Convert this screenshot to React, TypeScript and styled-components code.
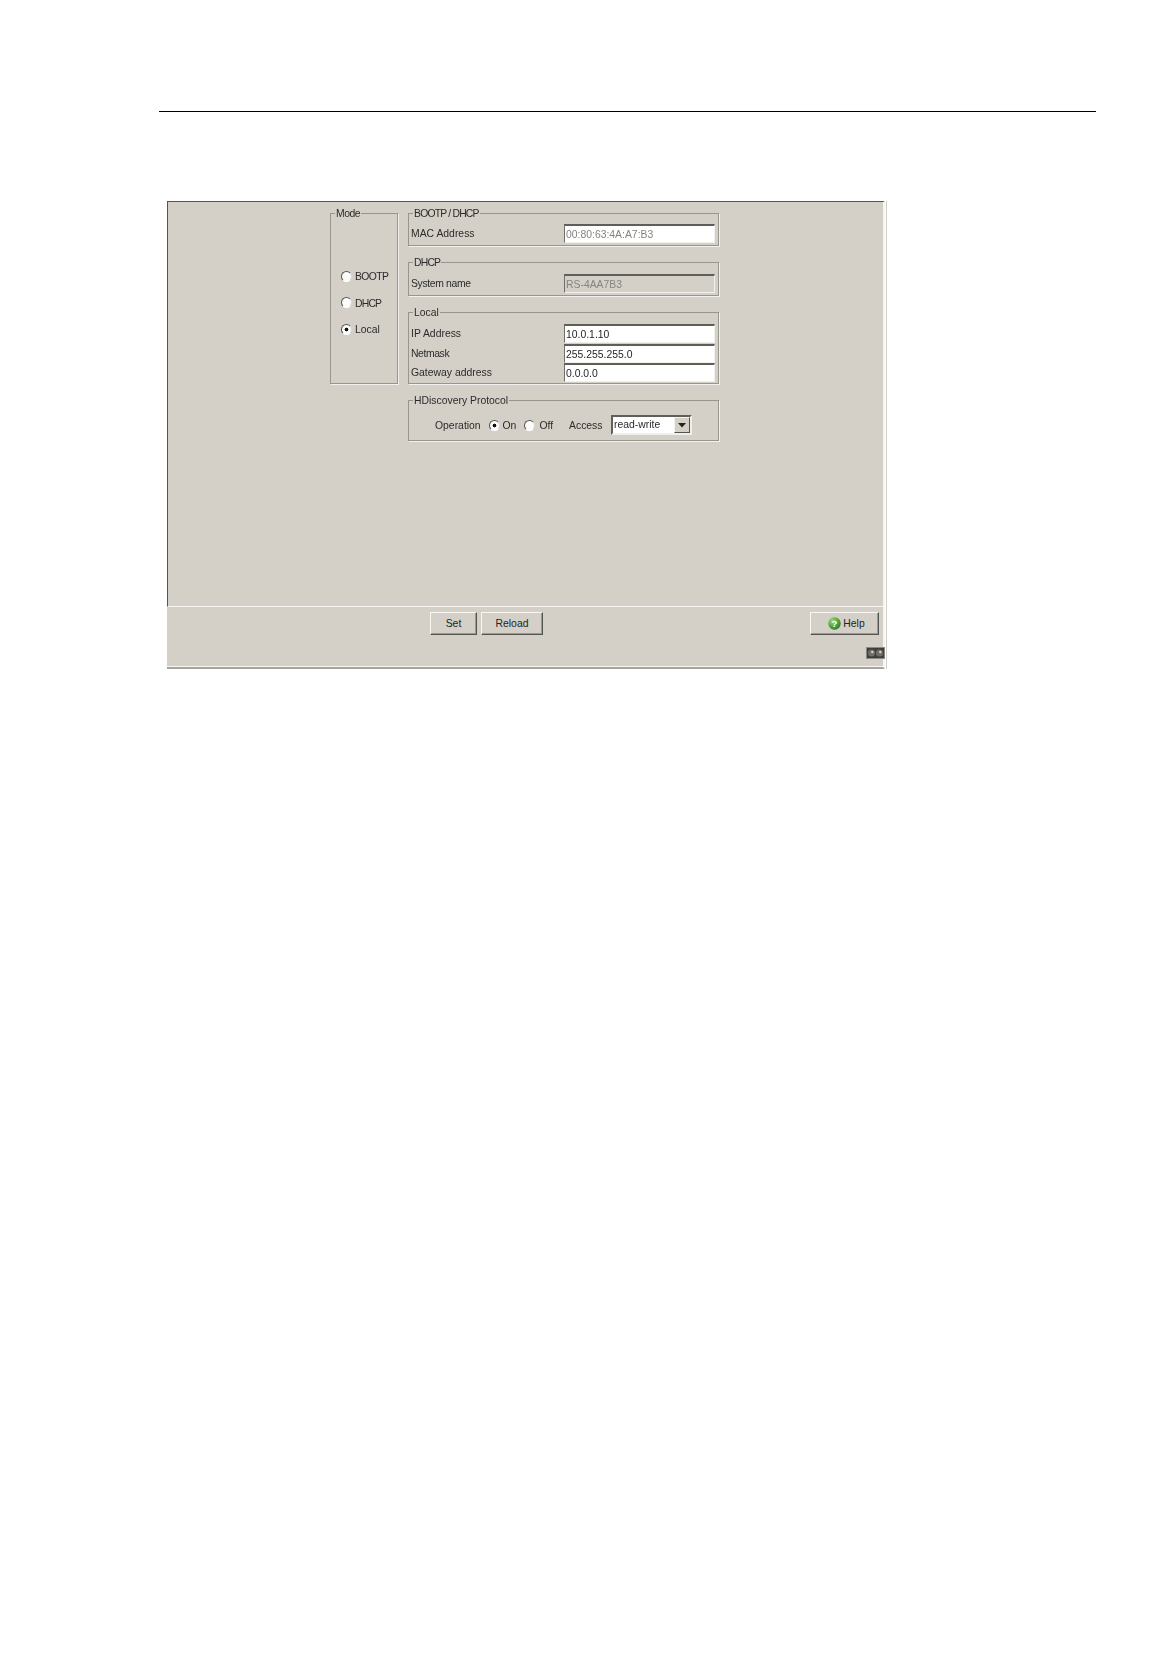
import React from "react";
import styled, { createGlobalStyle } from "styled-components";

const Global = createGlobalStyle`
  html, body { margin: 0; padding: 0; background: #fff; }
  body { font-family: "Liberation Sans", Arial, sans-serif; }
`;

const Page = styled.div`
  width: 1174px;
  height: 1668px;
  padding-top: 111px;
  box-sizing: border-box;
`;

const Rule = styled.hr`
  margin: 0 0 0 159px;
  width: 937px;
  height: 1px;
  border: 0;
  background: #000;
`;

const Panel = styled.section`
  margin: 89px 0 0 167px;
  width: 718px;
  background: #d4d0c8;
  color: #2b2b2b;
  font-size: 10.4px;
  line-height: 12px;
  filter: blur(0.3px);
  box-shadow: 1px 0 0 #fff, 2px 0 0 #cfcfca;
`;

const Content = styled.div`
  box-sizing: border-box;
  height: 406px;
  display: flex;
  align-items: flex-start;
  gap: 10px;
  padding: 4px 0 0 162px;
  border-top: 1px solid #55554f;
  border-left: 1px solid #55554f;
  border-right: 2px solid #f6f5f2;
  border-bottom: 1px solid #f6f5f2;
`;

const Group = styled.fieldset<{ $w: number; $h: number }>`
  box-sizing: border-box;
  width: ${(p) => p.$w}px;
  height: ${(p) => p.$h}px;
  margin: 0;
  padding: 0 3px 0 2px;
  min-width: 0;
  border: 1px solid #96958e;
  box-shadow: 1px 1px 0 #f2f1ed;
`;

const Caption = styled.legend<{ $ls?: number }>`
  margin-left: 2px;
  padding: 2px 1px 0;
  font-size: 10.4px;
  line-height: 12px;
  letter-spacing: ${(p) => p.$ls ?? 0}px;
`;

const Column = styled.div`
  display: flex;
  flex-direction: column;
  gap: 9px;
`;

const ModeList = styled.div`
  display: flex;
  flex-direction: column;
  gap: 14.5px;
  padding: 51px 0 0 8px;
`;

const Option = styled.label<{ $ls?: number; $gap?: number }>`
  display: flex;
  align-items: center;
  gap: ${(p) => p.$gap ?? 3}px;
  height: 12px;
  letter-spacing: ${(p) => p.$ls ?? 0}px;
`;

const Radio = styled.span<{ $on?: boolean }>`
  box-sizing: border-box;
  flex: none;
  width: 11px;
  height: 11px;
  margin-bottom: 2px;
  border-radius: 50%;
  border: 1px solid;
  border-color: #55554f #d9d6cf #ffffff #55554f;
  background: ${(p) =>
    p.$on ? "radial-gradient(circle, #111 0 1.6px, #fbfbfb 2.2px)" : "#fbfbfb"};
`;

const Row = styled.div<{ $pad: number }>`
  display: flex;
  align-items: center;
  justify-content: space-between;
  padding-top: ${(p) => p.$pad}px;
`;

const Label = styled.span<{ $ls?: number }>`
  letter-spacing: ${(p) => p.$ls ?? 0}px;
`;

const Field = styled.div<{ $muted?: boolean; $disabled?: boolean }>`
  box-sizing: border-box;
  width: 151px;
  height: 19px;
  padding: 3px 0 0 1px;
  border: 1px solid;
  border-top: 2px solid #5f5e59;
  border-left-color: #6f6e68;
  border-right-color: #f2f1ed;
  border-bottom-color: #f2f1ed;
  background: ${(p) => (p.$disabled ? "#d4d0c8" : "#fff")};
  color: ${(p) => (p.$muted ? "#85847f" : "#1f1f1f")};
  white-space: nowrap;
`;

const ProtocolRow = styled.div`
  display: flex;
  align-items: center;
  height: 20px;
  padding: 9px 0 0 24px;
`;

const Spaced = styled.span<{ $w: number }>`
  flex: none;
  width: ${(p) => p.$w}px;
`;

const Select = styled.div`
  box-sizing: border-box;
  flex: none;
  width: 81px;
  height: 20px;
  margin: 0 0 2px 1px;
  display: flex;
  align-items: stretch;
  justify-content: space-between;
  padding-left: 1px;
  border: 2px solid;
  border-color: #5f5e59 #f0efeb #f0efeb #5f5e59;
  background: #fff;
  line-height: 16px;
`;

const Arrow = styled.span`
  box-sizing: border-box;
  flex: none;
  width: 16px;
  display: flex;
  align-items: center;
  justify-content: center;
  background: #d4d0c8;
  border: 1px solid;
  border-color: #f4f3ef #55554f #55554f #f4f3ef;
`;

const Footer = styled.footer`
  box-sizing: border-box;
  height: 62px;
  padding: 5px 4px 0 263px;
  border-right: 2px solid #f6f5f2;
  border-bottom: 2px solid #a5a49e;
  box-shadow: inset 0 -1px 0 #f6f5f2;
`;

const Buttons = styled.div`
  display: flex;
  gap: 4px;
`;

const Button = styled.button<{ $w: number; $help?: boolean }>`
  box-sizing: border-box;
  width: ${(p) => p.$w}px;
  height: 23px;
  margin-left: ${(p) => (p.$help ? "auto" : 0)};
  padding: 0 0 0 ${(p) => (p.$help ? 4 : 0)}px;
  display: flex;
  align-items: center;
  justify-content: center;
  gap: 2px;
  background: #d4d0c8;
  color: #222;
  font: inherit;
  border: 1px solid;
  border-color: #f8f7f4 #55554f #55554f #f8f7f4;
  box-shadow: inset -1px -1px 0 #9a9992;
`;

const StatusRow = styled.div`
  display: flex;
  justify-content: flex-end;
  margin: 12px -6px 0 0;
`;

const Arrowhead = () => (
  <svg width="8" height="5" viewBox="0 0 8 5">
    <path d="M0 0h8L4 4.5z" fill="#222" />
  </svg>
);

const HelpIcon = () => (
  <svg width="13" height="13" viewBox="0 0 13 13">
    <defs>
      <radialGradient id="helpGreen" cx="35%" cy="30%" r="75%">
        <stop offset="0" stopColor="#9fdc7c" />
        <stop offset="0.6" stopColor="#4ea63a" />
        <stop offset="1" stopColor="#2c7a2c" />
      </radialGradient>
    </defs>
    <circle cx="6.5" cy="6.5" r="6.2" fill="url(#helpGreen)" />
    <text x="6.5" y="10" textAnchor="middle" fontSize="9.5" fontWeight="700" fill="#fff" fontFamily="Liberation Sans, sans-serif">?</text>
  </svg>
);

const StatusIcon = () => (
  <svg width="19" height="12" viewBox="0 0 19 12">
    <rect width="19" height="12" fill="#8a8984" />
    <rect x="1" y="1" width="17" height="10" fill="#3e3e3a" />
    <circle cx="5.5" cy="6" r="3.6" fill="#6f6f6a" />
    <circle cx="13.5" cy="6" r="3.6" fill="#6f6f6a" />
    <circle cx="6.3" cy="5" r="1.2" fill="#d2d2cd" />
    <circle cx="14.3" cy="5" r="1.2" fill="#d2d2cd" />
  </svg>
);

export default function App() {
  return (
    <Page>
      <Global />
      <Rule />
      <Panel>
        <Content>
          <Group $w={68} $h={178}>
            <Caption $ls={-0.5}>Mode</Caption>
            <ModeList>
              <Option $ls={-0.6}><Radio />BOOTP</Option>
              <Option $ls={-0.8}><Radio />DHCP</Option>
              <Option><Radio $on />Local</Option>
            </ModeList>
          </Group>
          <Column>
            <Group $w={311} $h={40}>
              <Caption $ls={-0.8}>BOOTP / DHCP</Caption>
              <Row $pad={4}>MAC Address<Field $muted>00:80:63:4A:A7:B3</Field></Row>
            </Group>
            <Group $w={311} $h={41}>
              <Caption $ls={-0.8}>DHCP</Caption>
              <Row $pad={5}><Label $ls={-0.35}>System name</Label><Field $muted $disabled>RS-4AA7B3</Field></Row>
            </Group>
            <Group $w={311} $h={79}>
              <Caption>Local</Caption>
              <Row $pad={5}>IP Address<Field>10.0.1.10</Field></Row>
              <Row $pad={1}><Label $ls={-0.4}>Netmask</Label><Field>255.255.255.0</Field></Row>
              <Row $pad={0}>Gateway address<Field>0.0.0.0</Field></Row>
            </Group>
            <Group $w={311} $h={48}>
              <Caption>HDiscovery Protocol</Caption>
              <ProtocolRow>
                <Spaced $w={53.5}>Operation</Spaced>
                <Spaced $w={35}><Option><Radio $on />On</Option></Spaced>
                <Spaced $w={45.5}><Option $gap={5}><Radio />Off</Option></Spaced>
                <Spaced $w={41}>Access</Spaced>
                <Select>read-write<Arrow><Arrowhead /></Arrow></Select>
              </ProtocolRow>
            </Group>
          </Column>
        </Content>
        <Footer>
          <Buttons>
            <Button $w={47}>Set</Button>
            <Button $w={62}>Reload</Button>
            <Button $w={69} $help><HelpIcon />Help</Button>
          </Buttons>
          <StatusRow><StatusIcon /></StatusRow>
        </Footer>
      </Panel>
    </Page>
  );
}
